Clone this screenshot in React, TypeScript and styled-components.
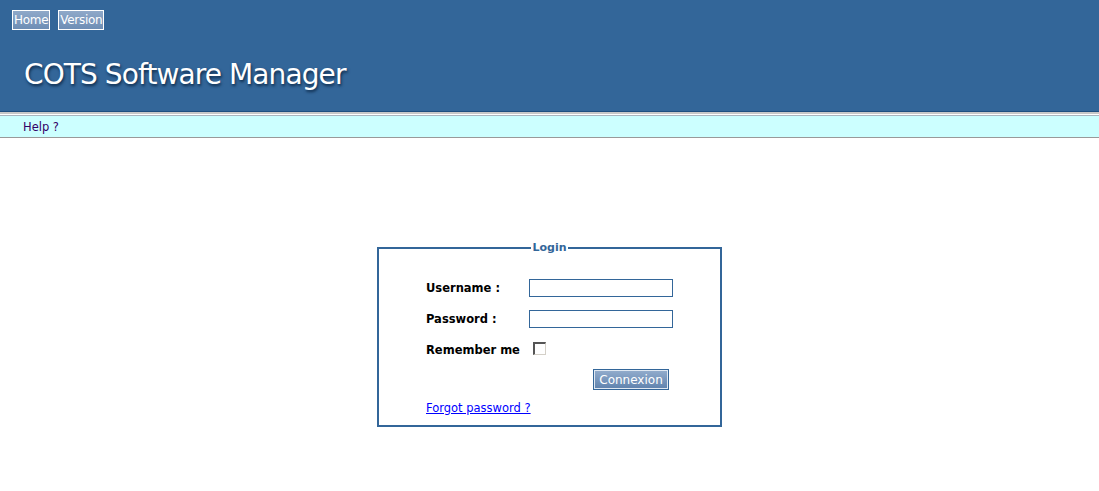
import React from "react";
import styled, { createGlobalStyle } from "styled-components";

const Global = createGlobalStyle`
  html, body { margin: 0; padding: 0; background: #ffffff; }
  body { font-family: Verdana, "DejaVu Sans", sans-serif; }
`;

const Header = styled.header`
  background: #336699;
  height: 111px;
  border-bottom: 1px solid #1f4f80;
  display: flex;
  flex-direction: column;
`;

const TopNav = styled.nav`
  display: flex;
  gap: 8px;
  padding: 10px 0 0 12px;
`;

const NavButton = styled.a`
  box-sizing: border-box;
  height: 20px;
  padding: 0 1px;
  display: flex;
  align-items: center;
  border: 1px solid #ffffff;
  background: linear-gradient(#8fa9c9, #6e8eb5);
  color: #ffffff;
  font-family: "DejaVu Sans", sans-serif;
  font-size: 12px;
  text-decoration: none;
  letter-spacing: -0.3px;
`;

const Title = styled.h1`
  margin: 28px 0 0 24px;
  color: #ffffff;
  font-family: "DejaVu Sans", sans-serif;
  font-weight: normal;
  font-size: 28px;
  letter-spacing: -0.9px;
  line-height: 34px;
  text-shadow: 1px 2px 3px #0d2a4a;
`;

const Separator = styled.div`
  height: 3px;
  background: linear-gradient(#c8c8c8 0 2px, #ffffff 2px);
`;

const HelpBar = styled.div`
  height: 21px;
  background: #ccffff;
  border-top: 1px solid #aab6bf;
  border-bottom: 1px solid #999999;
  display: flex;
  align-items: center;
  padding-left: 23px;
  font-family: "DejaVu Sans", sans-serif;
  font-size: 11.5px;
  color: #330066;
`;

const Main = styled.main`
  display: flex;
  justify-content: center;
  padding-top: 103px;
`;

const LoginBox = styled.fieldset`
  box-sizing: border-box;
  width: 345px;
  margin: 0;
  padding: 0;
  border: 2px solid #336699;
`;

const Legend = styled.legend`
  margin: 0 auto;
  padding: 0 1px;
  color: #336699;
  font-family: "DejaVu Sans", sans-serif;
  font-weight: bold;
  font-size: 11px;
`;

const Inner = styled.div`
  padding: 18px 0 9px 47px;
`;

const FormGrid = styled.div`
  display: grid;
  grid-template-columns: 103px 145px;
  grid-auto-rows: 31px;
  align-items: center;
`;

const Label = styled.label`
  font-family: "DejaVu Sans", sans-serif;
  font-weight: bold;
  font-size: 11.5px;
  color: #000000;
`;

const TextInput = styled.input`
  box-sizing: border-box;
  width: 144px;
  height: 18px;
  margin: 0;
  border: 1px solid #336699;
  background: #ffffff;
  outline: none;
`;

const Check = styled.span`
  box-sizing: border-box;
  width: 13px;
  height: 13px;
  margin-left: 4px;
  margin-top: -2px;
  border-top: 2px solid #555555;
  border-left: 2px solid #555555;
  border-right: 1px solid #d4d0c8;
  border-bottom: 1px solid #d4d0c8;
  background: #ffffff;
  display: block;
`;

const ButtonRow = styled.div`
  display: flex;
  justify-content: flex-end;
  width: 243px;
  margin-top: 4px;
`;

const SubmitButton = styled.button`
  box-sizing: border-box;
  width: 76px;
  height: 21px;
  padding: 0;
  border: 1px solid #336699;
  box-shadow: inset 0 0 0 1px #dfe8f2;
  background: linear-gradient(#93adcd, #5f82ad);
  color: #ffffff;
  font-family: "DejaVu Sans", sans-serif;
  font-size: 12px;
`;

const ForgotLink = styled.a`
  display: inline-block;
  margin-top: 11px;
  color: #0000ff;
  font-family: "DejaVu Sans", sans-serif;
  font-size: 11.5px;
  text-decoration: underline;
`;

export default function App() {
  return (
    <>
      <Global />
      <Header>
        <TopNav>
          <NavButton href="#">Home</NavButton>
          <NavButton href="#">Version</NavButton>
        </TopNav>
        <Title>COTS Software Manager</Title>
      </Header>
      <Separator />
      <HelpBar>Help ?</HelpBar>
      <Main>
        <LoginBox>
          <Legend>Login</Legend>
          <Inner>
            <FormGrid>
              <Label>Username :</Label>
              <TextInput type="text" />
              <Label>Password :</Label>
              <TextInput type="password" />
              <Label>Remember me</Label>
              <Check />
            </FormGrid>
            <ButtonRow>
              <SubmitButton>Connexion</SubmitButton>
            </ButtonRow>
            <ForgotLink href="#">Forgot password ?</ForgotLink>
          </Inner>
        </LoginBox>
      </Main>
    </>
  );
}
